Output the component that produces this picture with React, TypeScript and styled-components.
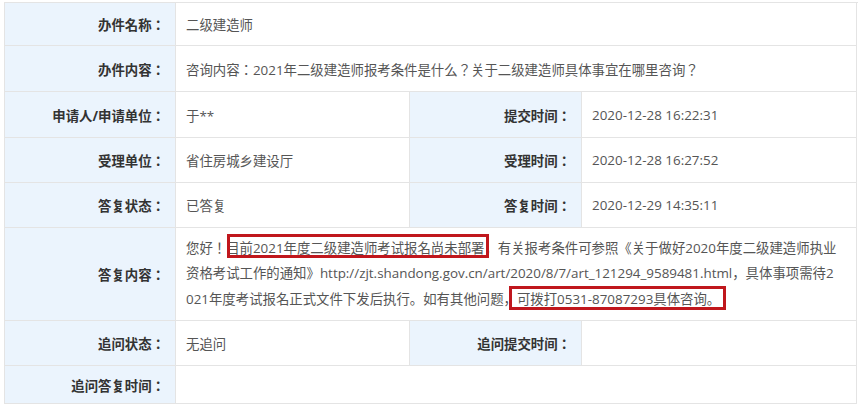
import React from 'react';
import styled, { createGlobalStyle } from 'styled-components';

const GlobalStyle = createGlobalStyle`
  html, body { margin: 0; padding: 0; background: #ffffff; }
  body { font-family: "Open Sans", "Noto Sans CJK JP", "Noto Sans CJK SC", sans-serif; }
`;

const Page = styled.div`
  padding: 2px 0 0 4px;
`;

const Table = styled.div`
  display: grid;
  grid-template-columns: 171px 234px 172px 275px;
  grid-template-rows: 43px 46px 46px 45px 45px 93px 45px 38px;
  width: 853px;
  border-top: 1px solid #e4e4e4;
  border-left: 1px solid #e4e4e4;
  font-size: 13.4px;
`;

const Cell = styled.div<{ $span?: number }>`
  grid-column: span ${(p) => p.$span ?? 1};
  box-sizing: border-box;
  min-width: 0;
  display: flex;
  align-items: center;
  padding: 0 10px;
  border-right: 1px solid #e4e4e4;
  border-bottom: 1px solid #e4e4e4;
`;

const Label = styled(Cell)`
  justify-content: flex-end;
  background: #ebf4fd;
  color: #333333;
  font-weight: 700;
  white-space: nowrap;
`;

const Value = styled(Cell)`
  color: #555555;
  white-space: nowrap;
`;

const ReplyCell = styled(Cell)`
  color: #555555;
`;

const ReplyText = styled.p`
  margin: 0;
  width: 100%;
  line-height: 25.5px;
  word-break: break-all;
`;

const Mark = styled.span<{ $t: number; $r: number; $b: number; $l: number }>`
  position: relative;
  &::after {
    content: '';
    position: absolute;
    top: ${(p) => p.$t}px;
    right: ${(p) => p.$r}px;
    bottom: ${(p) => p.$b}px;
    left: ${(p) => p.$l}px;
    border: 3px solid #c0171d;
    pointer-events: none;
  }
`;

export default function App() {
  return (
    <>
      <GlobalStyle />
      <Page>
        <Table>
          <Label>办件名称：</Label>
          <Value $span={3}>二级建造师</Value>

          <Label>办件内容：</Label>
          <Value $span={3}>咨询内容：2021年二级建造师报考条件是什么？关于二级建造师具体事宜在哪里咨询？</Value>

          <Label>申请人/申请单位：</Label>
          <Value>于**</Value>
          <Label>提交时间：</Label>
          <Value>2020-12-28 16:22:31</Value>

          <Label>受理单位：</Label>
          <Value>省住房城乡建设厅</Value>
          <Label>受理时间：</Label>
          <Value>2020-12-28 16:27:52</Value>

          <Label>答复状态：</Label>
          <Value>已答复</Value>
          <Label>答复时间：</Label>
          <Value>2020-12-29 14:35:11</Value>

          <Label>答复内容：</Label>
          <ReplyCell $span={3}>
            <ReplyText>
              您好！
              <Mark $t={-5} $r={-5} $b={-1} $l={1}>目前2021年度二级建造师考试报名尚未部署</Mark>
              ，有关报考条件可参照《关于做好2020年度二级建造师执业
              <br />
              资格考试工作的通知》http://zjt.shandong.gov.cn/art/2020/8/7/art_121294_9589481.html，具体事项需待2
              <br />
              021年度考试报名正式文件下发后执行。如有其他问题，
              <Mark $t={-4} $r={-6} $b={-2} $l={-8}>可拨打0531-87087293具体咨询。</Mark>
            </ReplyText>
          </ReplyCell>

          <Label>追问状态：</Label>
          <Value>无追问</Value>
          <Label>追问提交时间：</Label>
          <Value></Value>

          <Label>追问答复时间：</Label>
          <Value $span={3}></Value>
        </Table>
      </Page>
    </>
  );
}
